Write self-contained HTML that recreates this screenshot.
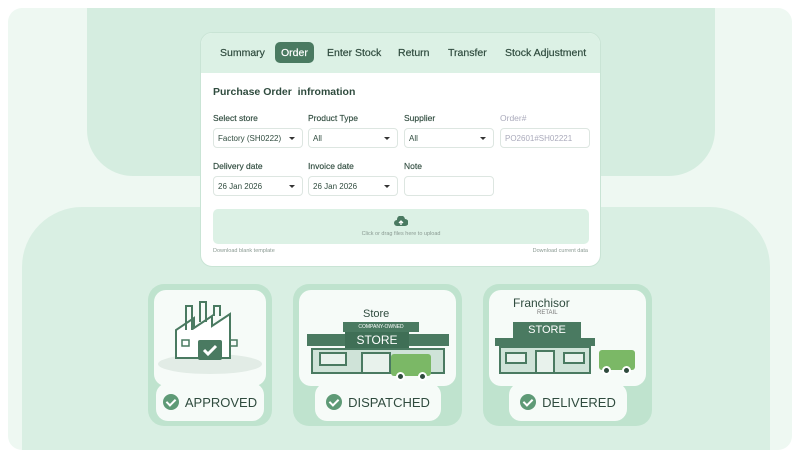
<!DOCTYPE html>
<html><head><style>
*{box-sizing:border-box;margin:0;padding:0}
body{width:800px;height:458px;background:#fff;font-family:"Liberation Sans",sans-serif;position:relative;overflow:hidden}
.frame{position:absolute;left:8px;top:8px;width:784px;height:442px;background:#eef8f2;border-radius:14px}
.top{position:absolute;left:87px;top:8px;width:628px;height:168px;background:#d5ede0;border-radius:0 0 46px 46px}
.bot{position:absolute;left:22px;top:207px;width:748px;height:243px;background:#d9efe3;border-radius:60px 60px 0 0}
.panel{position:absolute;left:200px;top:32px;width:401px;height:235px;background:#fff;border-radius:12px;border:1px solid #c9e4d5;overflow:hidden}
.tabs{height:40px;background:#dcf1e5;position:relative;font-size:10.5px;color:#2f4b3e;-webkit-text-stroke:0.2px #2f4b3e}
.tabs span{position:absolute;top:14px}
.tabs .on{background:#4a7a61;color:#fff;-webkit-text-stroke:0.2px #fff;border-radius:5px;left:74px;top:9px;padding:5px 6px;width:39px;height:21px}
h3{position:absolute;left:12px;top:53px;font-size:10.5px;color:#2f4b3e}
.lbl{position:absolute;font-size:8.5px;color:#2f4b3e;-webkit-text-stroke:0.15px #2f4b3e}
.in{position:absolute;height:20px;width:90px;border:1px solid #dde6e1;border-radius:4px;font-size:8px;color:#2f4b3e;padding:5px 4px}
.in b{position:absolute;right:7px;top:8px;border-left:3px solid transparent;border-right:3px solid transparent;border-top:3px solid #333}
.up{position:absolute;left:12px;top:176px;width:376px;height:35px;background:#dcf1e5;border-radius:5px;text-align:center;font-size:5.5px;color:#8a9a92;padding-top:22px}
.sm{position:absolute;top:215px;font-size:5.5px;color:#8a9a92}
.card{position:absolute;top:284px;height:142px;background:#bfe3ce;border-radius:16px}
.img{position:absolute;left:6px;top:6px;right:6px;height:96px;background:#f6fbf8;border-radius:12px;overflow:hidden}
.pill{position:absolute;top:99px;height:38px;background:#f6fbf8;border-radius:12px;font-size:13px;color:#2f4b3e;display:flex;align-items:center;justify-content:center;gap:6px}
.ck{width:16px;height:16px;border-radius:50%;background:#5e9a76;display:inline-block;position:relative}
.ck:after{content:"";position:absolute;left:5px;top:3px;width:4px;height:7px;border:solid #fff;border-width:0 2px 2px 0;transform:rotate(45deg)}
.w{position:absolute;background:#e8f2ec;border:2px solid #4a7a61}
.wh{position:absolute;width:9px;height:9px;border-radius:50%;background:#2f4b3e;border:2px solid #fff}
</style></head><body>
<div class="frame"></div><div class="top"></div><div class="bot"></div>
<div class="panel">
<div class="tabs"><span style="left:19px">Summary</span><span class="on">Order</span><span style="left:126px">Enter Stock</span><span style="left:197px">Return</span><span style="left:247px">Transfer</span><span style="left:304px">Stock Adjustment</span></div>
<h3>Purchase Order&nbsp; infromation</h3>
<div class="lbl" style="left:12px;top:80px">Select store</div><div class="lbl" style="left:107px;top:80px">Product Type</div><div class="lbl" style="left:203px;top:80px">Supplier</div><div class="lbl" style="left:299px;top:80px;color:#aab;-webkit-text-stroke:0">Order#</div>
<div class="in" style="left:12px;top:95px">Factory (SH0222)<b></b></div><div class="in" style="left:107px;top:95px">All<b></b></div><div class="in" style="left:203px;top:95px">All<b></b></div><div class="in" style="left:299px;top:95px;color:#aab">PO2601#SH02221</div>
<div class="lbl" style="left:12px;top:128px">Delivery date</div><div class="lbl" style="left:107px;top:128px">Invoice date</div><div class="lbl" style="left:203px;top:128px">Note</div>
<div class="in" style="left:12px;top:143px">26 Jan 2026<b></b></div><div class="in" style="left:107px;top:143px">26 Jan 2026<b></b></div><div class="in" style="left:203px;top:143px"></div>
<div class="up"><svg style="position:absolute;left:181px;top:7px" width="14" height="11" viewBox="0 0 14 11"><path d="M3 10a3 3 0 010-6 4 4 0 018-1 3 3 0 010 7z" fill="#4a7a61"/><path d="M7 9V5M5 7l2-2 2 2" stroke="#fff" fill="none" stroke-width="1.3"/></svg>Click or drag files here to upload</div>
<div class="sm" style="left:12px">Download blank template</div><div class="sm" style="right:12px">Download current data</div>
</div>
<div class="card" style="left:148px;width:124px"><div class="img">
<svg width="112" height="96" viewBox="0 0 112 96"><ellipse cx="56" cy="74" rx="52" ry="10" fill="#e2ece6"/><path d="M22 68V40l18-12v10l18-12v10l18-12v44z" fill="#fff" stroke="#4a7a61" stroke-width="2"/><path d="M32 40V16h6v24M46 32V12h6v20M60 26V16h6v10" fill="none" stroke="#4a7a61" stroke-width="2"/><rect x="28" y="50" width="7" height="6" fill="none" stroke="#4a7a61" stroke-width="1.5"/><rect x="76" y="50" width="7" height="6" fill="none" stroke="#4a7a61" stroke-width="1.5"/><rect x="44" y="50" width="24" height="20" rx="2" fill="#4a7a61"/><path d="M50 60l4 4 8-8" stroke="#fff" stroke-width="3" fill="none"/></svg></div><div class="pill" style="left:8px;width:108px"><span class="ck"></span>APPROVED</div></div>
<div class="card" style="left:293px;width:169px"><div class="img">
<div style="position:absolute;left:64px;top:18px;font-size:11px;color:#2f4b3e">Store</div>
<div style="position:absolute;left:44px;top:32px;width:76px;height:10px;background:#4a7a61;color:#fff;font-size:5px;text-align:center;line-height:10px">COMPANY-OWNED</div>
<div style="position:absolute;left:8px;top:44px;width:142px;height:12px;background:#4a7a61"></div>
<div style="position:absolute;left:46px;top:42px;width:64px;height:16px;background:#3f6f56;color:#fff;font-size:12px;text-align:center;line-height:16px">STORE</div>
<div style="position:absolute;left:12px;top:58px;width:134px;height:26px;background:#cfe3d8;border:2px solid #4a7a61"></div>
<div class="w" style="left:20px;top:62px;width:28px;height:14px"></div>
<div class="w" style="left:62px;top:62px;width:30px;height:22px"></div>
<div style="position:absolute;left:92px;top:64px;width:40px;height:22px;background:#7bb866;border-radius:3px"></div>
<div class="wh" style="left:97px;top:82px"></div><div class="wh" style="left:119px;top:82px"></div></div>
<div class="pill" style="left:22px;width:126px"><span class="ck"></span>DISPATCHED</div></div>
<div class="card" style="left:483px;width:169px"><div class="img">
<div style="position:absolute;left:24px;top:6px;font-size:12px;color:#2f4b3e">Franchisor</div>
<div style="position:absolute;left:48px;top:20px;font-size:6px;color:#777">RETAIL</div>
<div style="position:absolute;left:24px;top:32px;width:68px;height:16px;background:#4a7a61;color:#fff;font-size:11px;text-align:center;line-height:16px">STORE</div>
<div style="position:absolute;left:6px;top:48px;width:100px;height:8px;background:#4a7a61"></div>
<div style="position:absolute;left:10px;top:56px;width:92px;height:28px;background:#cfe3d8;border:2px solid #4a7a61"></div>
<div class="w" style="left:16px;top:62px;width:22px;height:12px"></div>
<div class="w" style="left:46px;top:60px;width:20px;height:24px"></div>
<div class="w" style="left:74px;top:62px;width:22px;height:12px"></div>
<div style="position:absolute;left:110px;top:60px;width:36px;height:20px;background:#7bb866;border-radius:3px"></div>
<div class="wh" style="left:113px;top:76px"></div><div class="wh" style="left:133px;top:76px"></div></div>
<div class="pill" style="left:26px;width:118px"><span class="ck"></span>DELIVERED</div></div>
</body></html>
